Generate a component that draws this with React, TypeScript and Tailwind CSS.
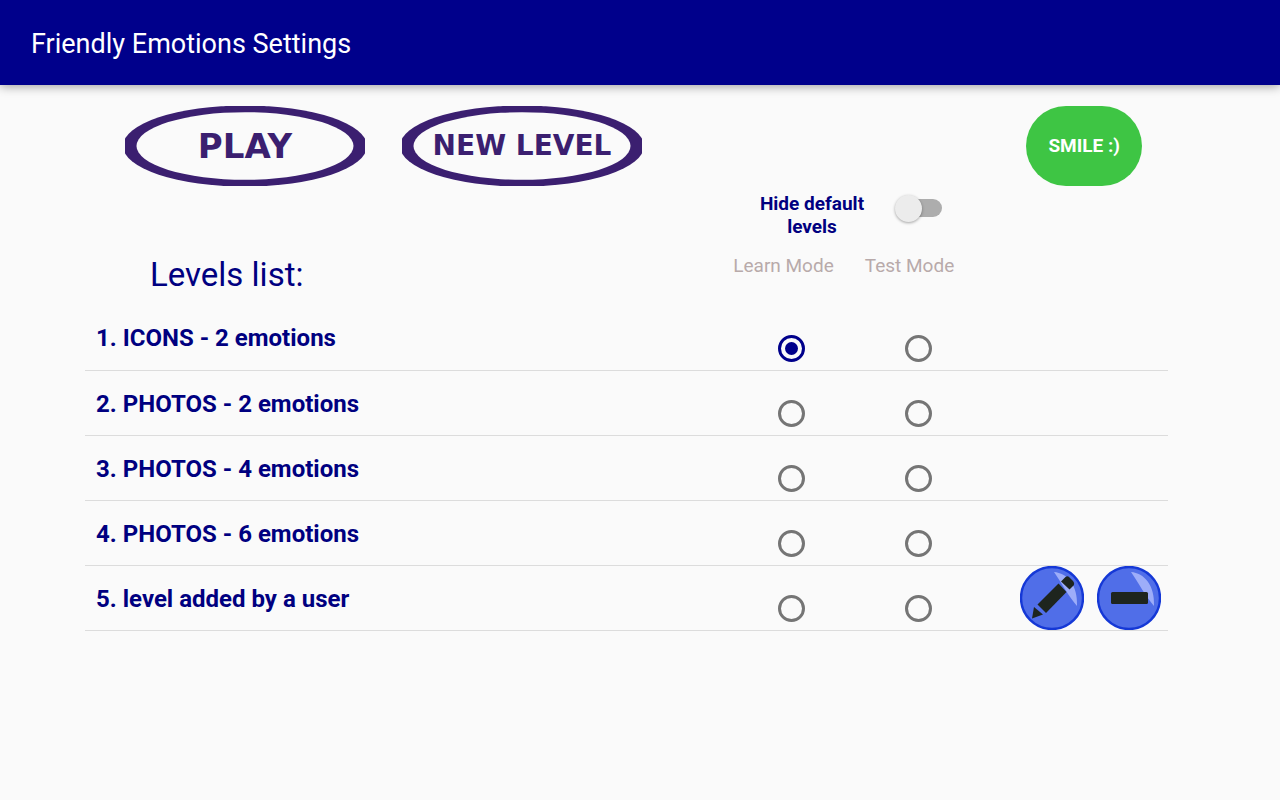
import { useState } from "react";

type Level = { id: number; name: string; custom?: boolean };

const LEVELS: Level[] = [
  { id: 1, name: "ICONS - 2 emotions" },
  { id: 2, name: "PHOTOS - 2 emotions" },
  { id: 3, name: "PHOTOS - 4 emotions" },
  { id: 4, name: "PHOTOS - 6 emotions" },
  { id: 5, name: "level added by a user", custom: true },
];

const MODES = ["learn", "test"] as const;

function OvalButton({ label, textClass }: { label: string; textClass: string }) {
  return (
    <button type="button" className="relative grid h-20 w-60 shrink-0 cursor-pointer place-items-center">
      <svg viewBox="0 0 240 80" className="absolute inset-0 size-full" aria-hidden="true">
        <ellipse cx="120" cy="40" rx="122" ry="40.500" fill="#3b1f70" />
        <ellipse cx="120" cy="40" rx="108.500" ry="33.800" fill="#fafafa" />
      </svg>
      <span className={`relative font-['DejaVu_Sans',sans-serif] font-bold leading-none text-[#3b1f70] ${textClass}`}>
        {label}
      </span>
    </button>
  );
}

function RoundBase() {
  return (
    <>
      <circle cx="32" cy="32" r="31" fill="#506ee8" stroke="#1538d6" strokeWidth="2.4" />
      <path d="M34 6C47 7 58 19 57 40C49 31 41 16 34 6Z" fill="#9dadf9" />
    </>
  );
}

function EditIcon() {
  return (
    <svg viewBox="0 0 64 64" className="size-16" aria-hidden="true">
      <RoundBase />
      <g fill="#1e251e">
        <path d="M38.500 17.500L46.500 26L26 47L17.500 38.500Z" />
        <path d="M41 15.500L45.500 11Q47.500 9.500 49.500 11.500L53 15Q55 17.500 53.500 19.500L49.500 23.500Z" />
        <path d="M14 41L23 48.500L12 52.500Z" />
      </g>
    </svg>
  );
}

function RemoveIcon() {
  return (
    <svg viewBox="0 0 64 64" className="size-16" aria-hidden="true">
      <RoundBase />
      <rect x="14" y="26" width="37" height="12" rx="1.500" fill="#1e251e" />
    </svg>
  );
}

export default function App() {
  const [selected, setSelected] = useState("1-learn");
  const [hidden, setHidden] = useState(false);
  const levels = hidden ? LEVELS.filter((l) => l.custom) : LEVELS;

  return (
    <div className="min-h-screen bg-[#fafafa] font-[Roboto,sans-serif] text-[#000080]">
      <header className="flex h-[85px] items-center bg-[#00008b] px-[31px] pt-[2px] shadow-[0_1px_10px_rgba(0,0,0,0.4)]">
        <h1 className="text-[27px] leading-8 text-white">Friendly Emotions Settings</h1>
      </header>

      <main className="pt-[21px] pr-28 pl-[85px]">
        <div className="flex items-center gap-[37px] pr-[26px] pl-10">
          <OvalButton label="PLAY" textClass="text-[34px]" />
          <OvalButton label="NEW LEVEL" textClass="text-[28px]" />
          <button
            type="button"
            className="ml-auto h-20 cursor-pointer rounded-[40px] bg-[#3ec544] px-[22px] text-[19px] font-bold text-white"
          >
            SMILE :)
          </button>
        </div>

        <div className="mt-[6px] flex justify-end pr-[226px]">
          <label className="flex cursor-pointer items-start gap-[30px]">
            <span className="w-[106px] text-center text-[19px] leading-[23px] font-bold">Hide default levels</span>
            <input
              type="checkbox"
              role="switch"
              checked={hidden}
              onChange={(e) => setHidden(e.target.checked)}
              className="relative flex h-8 w-[47px] cursor-pointer appearance-none items-center before:absolute before:right-0 before:h-[18px] before:w-[38px] before:rounded-full before:bg-[#adadad] after:relative after:size-[27px] after:rounded-full after:bg-[#ececec] after:shadow-[0_1px_3px_rgba(0,0,0,0.35)] checked:justify-end"
            />
          </label>
        </div>

        <table className="w-full table-fixed border-collapse">
          <colgroup>
            <col />
            <col className="w-[127px]" />
            <col className="w-[127px]" />
            <col className="w-[186px]" />
          </colgroup>
          <thead>
            <tr className="h-[67px] align-top">
              <th scope="col" className="pt-[17px] pl-[65px] text-left text-[33px] leading-10 font-normal">
                Levels list:
              </th>
              <th scope="col" className="pt-4 pr-4 text-[19px] leading-[23px] font-normal whitespace-nowrap text-[#b8aaaa]">
                Learn Mode
              </th>
              <th scope="col" className="pt-4 pr-[18px] text-[19px] leading-[23px] font-normal whitespace-nowrap text-[#b8aaaa]">
                Test Mode
              </th>
              <td />
            </tr>
          </thead>
          <tbody>
            {levels.map((level) => (
              <tr key={level.id} className="h-[65px] border-b border-[#dcdcdc]">
                <th scope="row" className="pt-[2px] pl-[11px] text-left text-2xl font-bold">
                  {level.id}. {level.name}
                </th>
                {MODES.map((mode) => {
                  const value = `${level.id}-${mode}`;
                  return (
                    <td key={mode} className="pb-2 align-bottom">
                      <input
                        type="radio"
                        name="level-mode"
                        aria-label={`${level.name}, ${mode} mode`}
                        value={value}
                        checked={selected === value}
                        onChange={() => setSelected(value)}
                        className="mx-auto grid size-[27px] cursor-pointer appearance-none place-content-center rounded-full border-3 border-[#757575] checked:border-[#00008b] checked:before:size-[13px] checked:before:rounded-full checked:before:bg-[#00008b]"
                      />
                    </td>
                  );
                })}
                <td>
                  {level.custom && (
                    <div className="flex justify-end gap-[13px] pr-[7px]">
                      <button type="button" aria-label="Edit level" className="cursor-pointer">
                        <EditIcon />
                      </button>
                      <button type="button" aria-label="Remove level" className="cursor-pointer">
                        <RemoveIcon />
                      </button>
                    </div>
                  )}
                </td>
              </tr>
            ))}
          </tbody>
        </table>
      </main>
    </div>
  );
}
